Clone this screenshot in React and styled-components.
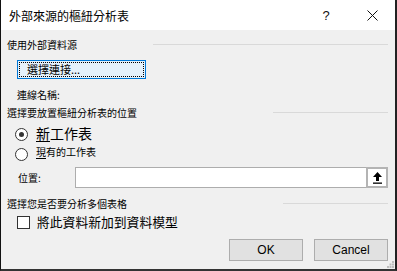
import React from "react";
import styled, { createGlobalStyle } from "styled-components";

const Global = createGlobalStyle`
  html, body { margin: 0; padding: 0; background: #ffffff; }
  body { font-family: "Noto Sans CJK TC", "Noto Sans", sans-serif; color: #000; }
`;

const Window = styled.div`
  width: 394px;
  height: 269px;
  border-left: 1px solid #111;
  border-right: 2px solid #222;
  border-bottom: 2px solid #333;
  background: #f0f0f0;
  display: flex;
  flex-direction: column;
  position: relative;
`;

const TitleBar = styled.div`
  height: 30px;
  background: #fff;
  display: flex;
  align-items: center;
  padding-left: 8px;
  flex-shrink: 0;
`;

const Title = styled.div`
  font-size: 12px;
  flex: 1;
  letter-spacing: 0;
`;

const TitleButton = styled.div`
  width: ${(p) => p.w}px;
  display: flex;
  justify-content: center;
  align-items: center;
  font-family: "Liberation Sans", sans-serif;
  font-size: 13px;
  color: #111;
`;

const Body = styled.div`
  flex: 1;
  display: flex;
  flex-direction: column;
  padding: 6px 6px 0 6px;
`;

const Section = styled.div`
  display: flex;
  align-items: center;
  height: 16px;
  margin-top: ${(p) => p.mt || 0}px;
  gap: 8px;
`;

const SectionLabel = styled.div`
  font-size: 10px;
  white-space: nowrap;
`;

const Rule = styled.div`
  height: 1px;
  background: #d9d9d9;
  margin-left: ${(p) => p.ml || 0}px;
  flex: 1;
  margin-right: 1px;
`;

const Indented = styled.div`
  padding-left: ${(p) => p.pl}px;
  margin-top: ${(p) => p.mt || 0}px;
  display: flex;
  align-items: center;
  height: ${(p) => p.h}px;
`;

const ConnectButton = styled.button`
  width: 129px;
  height: 19px;
  border: 1px solid #0078d7;
  background: #e5f1fb;
  padding: 1px;
  font-family: inherit;
  display: flex;
  margin: 0;
`;

const FocusRect = styled.span`
  flex: 1;
  border: 1px dotted #000;
  font-size: 11px;
  display: flex;
  align-items: center;
  padding-left: 7px;
  line-height: 1;
`;

const SmallLabel = styled.div`
  font-size: 10px;
`;

const RadioRow = styled.label`
  display: flex;
  align-items: center;
  height: 18px;
  padding-left: 8px;
  margin-top: ${(p) => p.mt || 0}px;
  gap: 8px;
`;

const RadioCircle = styled.span`
  width: 11px;
  height: 11px;
  border: 1px solid #333;
  border-radius: 50%;
  background: #fff;
  display: flex;
  align-items: center;
  justify-content: center;
  flex-shrink: 0;
  &::after {
    content: "";
    width: 5px;
    height: 5px;
    border-radius: 50%;
    background: ${(p) => (p.checked ? "#333" : "transparent")};
  }
`;

const RadioText = styled.span`
  font-size: ${(p) => p.size}px;
  line-height: 1;
  margin-top: ${(p) => p.dy || 0}px;
`;

const Accel = styled.span`
  text-decoration: underline;
  text-underline-offset: 2px;
`;

const LocationRow = styled.div`
  display: flex;
  align-items: center;
  margin-top: 4px;
  height: 21px;
`;

const LocationLabel = styled.div`
  font-size: 10px;
  width: 57px;
  padding-left: 11px;
`;

const InputBox = styled.div`
  flex: 1;
  height: 19px;
  border: 1px solid #adadad;
  border-right: none;
  background: #fff;
`;

const PickButton = styled.div`
  width: 18px;
  height: 17px;
  border: 2px solid #b4b4b4;
  background: #fff;
  display: flex;
  align-items: center;
  justify-content: center;
  margin-right: 1px;
`;

const CheckRow = styled.label`
  display: flex;
  align-items: center;
  height: 18px;
  padding-left: 10px;
  gap: 7px;
  margin-top: 2px;
`;

const CheckBox = styled.span`
  width: 11px;
  height: 11px;
  border: 1px solid #333;
  background: #fff;
  flex-shrink: 0;
`;

const CheckText = styled.span`
  font-size: 12.8px;
  line-height: 1;
`;

const Footer = styled.div`
  display: flex;
  justify-content: flex-end;
  gap: 11px;
  margin-top: 8px;
  padding-right: 1px;
`;

const DialogButton = styled.button`
  width: 74px;
  height: 22px;
  background: #e1e1e1;
  border: 1px solid #adadad;
  font-family: "Liberation Sans", "Noto Sans", sans-serif;
  font-size: 12px;
  color: #000;
  margin: 0;
  padding: 0;
`;

const Grip = styled.svg`
  position: absolute;
  right: 1px;
  bottom: 1px;
`;

export default function App() {
  return (
    <>
      <Global />
      <Window>
        <TitleBar>
          <Title>外部來源的樞紐分析表</Title>
          <TitleButton w={46}>?</TitleButton>
          <TitleButton w={46}>
            <svg width="11" height="11" viewBox="0 0 11 11">
              <path d="M0.5 0.5 L10.5 10.5 M10.5 0.5 L0.5 10.5" stroke="#111" strokeWidth="1" />
            </svg>
          </TitleButton>
        </TitleBar>
        <Body>
          <Section>
            <SectionLabel>使用外部資料源</SectionLabel>
            <Rule ml={68} />
          </Section>
          <Indented pl={10} mt={8} h={19}>
            <ConnectButton>
              <FocusRect>選擇連接...</FocusRect>
            </ConnectButton>
          </Indented>
          <Indented pl={10} mt={7} h={16}>
            <SmallLabel>連線名稱:</SmallLabel>
          </Indented>
          <Section mt={2}>
            <SectionLabel>選擇要放置樞紐分析表的位置</SectionLabel>
            <Rule ml={128} />
          </Section>
          <RadioRow mt={5}>
            <RadioCircle checked />
            <RadioText size={14} dy={-3}>
              <Accel>新</Accel>工作表
            </RadioText>
          </RadioRow>
          <RadioRow mt={2}>
            <RadioCircle />
            <RadioText size={10} dy={-4}>
              <Accel>現</Accel>有的工作表
            </RadioText>
          </RadioRow>
          <LocationRow>
            <LocationLabel>位置:</LocationLabel>
            <InputBox />
            <PickButton>
              <svg width="11" height="12" viewBox="0 0 11 12">
                <path d="M5.5 0 L10 5 L7 5 L7 9 L4 9 L4 5 L1 5 Z" fill="#000" />
                <rect x="1" y="10.5" width="9" height="1.3" fill="#000" />
              </svg>
            </PickButton>
          </LocationRow>
          <Section mt={7}>
            <SectionLabel>選擇您是否要分析多個表格</SectionLabel>
            <Rule ml={148} />
          </Section>
          <CheckRow>
            <CheckBox />
            <CheckText>將此資料新加到資料模型</CheckText>
          </CheckRow>
          <Footer>
            <DialogButton>OK</DialogButton>
            <DialogButton>Cancel</DialogButton>
          </Footer>
        </Body>
        <Grip width="7" height="7" viewBox="0 0 7 7">
          <rect x="5" y="0" width="2" height="2" fill="#bdbdbd" />
          <rect x="2.5" y="2.5" width="2" height="2" fill="#bdbdbd" />
          <rect x="5" y="2.5" width="2" height="2" fill="#bdbdbd" />
          <rect x="0" y="5" width="2" height="2" fill="#bdbdbd" />
          <rect x="2.5" y="5" width="2" height="2" fill="#bdbdbd" />
          <rect x="5" y="5" width="2" height="2" fill="#bdbdbd" />
        </Grip>
      </Window>
    </>
  );
}
